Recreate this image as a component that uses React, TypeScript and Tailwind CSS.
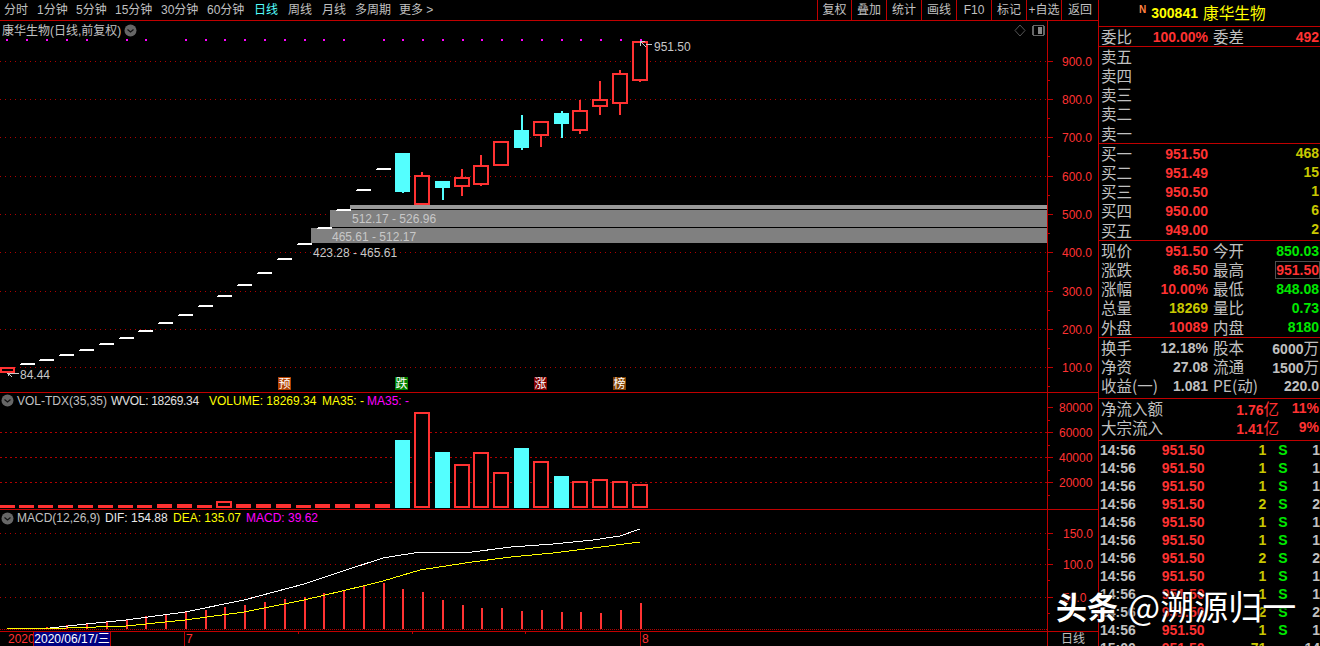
import { ReactNode } from 'react';

const RED = '#ff3232';
const CYAN = '#54ffff';

const tabs = [
  { t: '分时', w: 'w-[33px]' },
  { t: '1分钟', w: 'w-[39px]' },
  { t: '5分钟', w: 'w-[39px]' },
  { t: '15分钟', w: 'w-[46px]' },
  { t: '30分钟', w: 'w-[46px]' },
  { t: '60分钟', w: 'w-[47px]' },
  { t: '日线', w: 'w-[34px]', on: true },
  { t: '周线', w: 'w-[34px]' },
  { t: '月线', w: 'w-[33px]' },
  { t: '多周期', w: 'w-[44px]' },
  { t: '更多 >', w: 'w-[40px]' },
];
const buttons = [
  { t: '复权', w: 'w-[34px]' },
  { t: '叠加', w: 'w-[35px]' },
  { t: '统计', w: 'w-[35px]' },
  { t: '画线', w: 'w-[35px]' },
  { t: 'F10', w: 'w-[35px]' },
  { t: '标记', w: 'w-[35px]' },
  { t: '+自选', w: 'w-[35px]' },
  { t: '返回', w: 'w-[37px]' },
];

// [left, bodyTop, bodyBottom, wickTop, wickBottom, up]
const candles: [number, number, number, number, number, boolean][] = [
  [395, 153, 192, 153, 193, false],
  [414, 175, 205, 172, 205, true],
  [435, 181, 188, 181, 200, false],
  [454, 177, 187, 169, 196, true],
  [473, 165, 185, 155, 186, true],
  [493, 141, 166, 141, 166, true],
  [514, 130, 148, 115, 150, false],
  [533, 121, 136, 121, 147, true],
  [554, 113, 124, 111, 138, false],
  [572, 110, 131, 100, 134, true],
  [592, 99, 107, 81, 115, true],
  [612, 73, 104, 70, 115, true],
  [632, 41, 81, 41, 82, true],
];
const dashes = [
  [20, 363], [39, 359], [59, 354], [79, 349], [99, 343], [119, 337], [138, 330], [158, 322], [178, 314], [198, 305],
  [217, 295], [237, 284], [257, 272], [277, 258], [297, 243], [317, 227], [336, 209], [356, 189], [376, 168],
];
const dots = [6, 26, 46, 66, 86, 126, 145, 185, 205, 224, 244, 264, 284, 304, 323, 343, 383, 402, 422, 442, 462, 481, 501, 521, 541, 561, 580, 600, 620, 640];
const priceGrid = [61, 99, 137, 176, 214, 252, 291, 329, 367];
const priceAxis = ['900.0', '800.0', '700.0', '600.0', '500.0', '400.0', '300.0', '200.0', '100.0'];

const smallVol = [
  [0, 505], [19, 505], [38, 505], [58, 505], [78, 505], [98, 505], [118, 505], [137, 505], [157, 504], [177, 504],
  [197, 505], [236, 504], [256, 504], [276, 504], [296, 505], [315, 504], [335, 504], [355, 504], [375, 504],
];
const bigVol: [number, number, boolean][] = [
  [395, 440, false], [414, 412, true], [435, 452, false], [454, 464, true], [473, 452, true], [493, 472, true], [514, 448, false],
  [533, 461, true], [554, 476, false], [572, 481, true], [592, 479, true], [612, 481, true], [632, 484, true],
];
const macdBars = [
  [46, 627], [66, 625], [86, 623], [106, 621], [126, 619], [145, 616], [165, 614], [185, 612], [205, 610], [224, 607],
  [244, 605], [264, 602], [284, 599], [304, 597], [323, 593], [343, 590], [363, 586], [383, 583], [402, 589], [422, 592],
  [442, 600], [462, 605], [481, 608], [501, 608], [521, 611], [541, 610], [561, 612], [580, 612], [600, 613], [620, 610], [640, 603],
];
const dif = '50,628 86,624 126,620 185,612 244,600 304,584 343,571 383,558 420,552 472,552 511,547 553,544 593,540 620,536 640,529';
const dea = '7,629 67,628 126,626 185,620 244,612 304,600 363,586 383,581 420,570 472,562 511,557 553,553 593,548 640,542';

const badges = [
  { x: 278, t: '预', c: '#b04000' },
  { x: 395, t: '跌', c: '#008000' },
  { x: 534, t: '涨', c: '#800000' },
  { x: 613, t: '榜', c: '#804000' },
];

function Circle() {
  return (
    <svg width="13" height="13" viewBox="0 0 13 13" className="shrink-0">
      <circle cx="6.5" cy="6.5" r="6" fill="#666" />
      <path d="M3.5 5.5 6.5 8 9.5 5.5" fill="none" stroke="#111" strokeWidth="1.2" />
    </svg>
  );
}

function Hollow({ x, y, w, h }: { x: number; y: number; w: number; h: number }) {
  return <rect x={x + 1} y={y + 1} width={w - 2} height={h - 2} fill="#000" stroke={RED} strokeWidth="2" />;
}

function MainChart() {
  return (
    <svg viewBox="0 21 1047 371" className="absolute inset-0 w-[1047px] h-[371px]" shapeRendering="crispEdges" fontFamily="'Liberation Sans','Noto Sans CJK SC',sans-serif">
      {priceGrid.map((y) => (
        <line key={y} x1="0" x2="1047" y1={y + 0.5} y2={y + 0.5} stroke="#b00000" strokeDasharray="1 4" />
      ))}
      <rect x="350" y="205" width="697" height="4" fill="#999" />
      <rect x="330" y="210" width="717" height="17" fill="#808080" />
      <rect x="311" y="228" width="736" height="15" fill="#808080" />
      <g fontSize="12" fill="#c8c8c8" shapeRendering="auto">
        <text x="352" y="223">512.17 - 526.96</text>
        <text x="332" y="241">465.61 - 512.17</text>
        <text x="313" y="257">423.28 - 465.61</text>
        <text x="654" y="51">951.50</text>
        <text x="20" y="379">84.44</text>
      </g>
      {dots.map((x) => (
        <rect key={x} x={x} y="39" width="2" height="2" fill="#ff00ff" />
      ))}
      {dashes.map(([x, y]) => (
        <g key={x}>
          <rect x={x + 1} y={y} width="14" height="2" fill="#fff" />
          <rect x={x} y={y + 1} width="1" height="1" fill="#fff" />
        </g>
      ))}
      <Hollow x={0} y={367} w={15} h={6} />
      {candles.map(([x, top, bot, wt, wb, up]) =>
        up ? (
          <g key={x}>
            <rect x={x + 7} y={wt} width="2" height={wb - wt} fill={RED} />
            <Hollow x={x} y={top} w={16} h={bot - top} />
          </g>
        ) : (
          <g key={x}>
            <rect x={x + 7} y={wt} width="2" height={wb - wt} fill={CYAN} />
            <rect x={x} y={top} width="15" height={bot - top} fill={CYAN} />
          </g>
        ),
      )}
      <path d="M640 41 645 41M640 41 640 46M640 41 646 47M646 44 652 45" stroke="#c8c8c8" fill="none" />
      <path d="M8 373 13 373M8 373 8 376M8 373 12 377M7 373 19 373" stroke="#c8c8c8" fill="none" />
      {badges.map((b) => (
        <g key={b.x}>
          <rect x={b.x} y="377" width="13" height="13" fill={b.c} />
          <text x={b.x + 6.5} y="388" fontSize="12" textAnchor="middle" fill="#fff" shapeRendering="auto">{b.t}</text>
        </g>
      ))}
      <path d="M1020 25 1025 30.500 1020 36 1015 30.500Z" fill="none" stroke="#555" shapeRendering="auto" />
      <rect x="1033" y="25.500" width="11" height="10" rx="1" fill="none" stroke="#666" strokeWidth="1.500" />
      <rect x="1038" y="27" width="4" height="7" fill="#888" />
    </svg>
  );
}

function VolChart() {
  return (
    <svg viewBox="0 393 1047 116" className="absolute inset-0 w-[1047px] h-[116px]" shapeRendering="crispEdges">
      {[432, 457, 482].map((y) => (
        <line key={y} x1="0" x2="1047" y1={y + 0.5} y2={y + 0.5} stroke="#b00000" strokeDasharray="2 3" />
      ))}
      {smallVol.map(([x, y]) => (
        <rect key={x} x={x} y={y} width="15" height={508 - y} fill={RED} />
      ))}
      <Hollow x={216} y={501} w={16} h={7} />
      {bigVol.map(([x, y, up]) =>
        up ? <Hollow key={x} x={x} y={y} w={16} h={508 - y} /> : <rect key={x} x={x} y={y} width="15" height={508 - y} fill={CYAN} />,
      )}
    </svg>
  );
}

function MacdChart() {
  return (
    <svg viewBox="0 510 1047 121" className="absolute inset-0 w-[1047px] h-[121px]" shapeRendering="crispEdges">
      {[533, 564, 597, 629].map((y) => (
        <line key={y} x1="0" x2="1047" y1={y + 0.5} y2={y + 0.5} stroke="#b00000" strokeDasharray={y === 629 ? '1 1' : '1 4'} />
      ))}
      {macdBars.map(([x, y]) => (
        <rect key={x} x={x} y={y} width="2" height={629 - y} fill={RED} />
      ))}
      <polyline points={dif} fill="none" stroke="#fff" strokeWidth="1" />
      <polyline points={dea} fill="none" stroke="#ffff00" strokeWidth="1" />
    </svg>
  );
}

function Axis({ top, height, labels, x = 1062 }: { top: number; height: number; labels: [string, number][]; x?: number }) {
  const step = labels.length > 1 ? labels[1][1] - labels[0][1] : 0;
  return (
    <svg viewBox={`1048 ${top} 50 ${height}`} className="w-[50px]" style={{ height }} fontFamily="'Liberation Sans',sans-serif">
      {labels.map(([t, y]) => (
        <g key={t}>
          <line x1="1048" x2="1053" y1={y + 0.5} y2={y + 0.5} stroke="#c00000" shapeRendering="crispEdges" />
          <line x1="1048" x2="1050" y1={y + step / 2 + 0.5} y2={y + step / 2 + 0.5} stroke="#c00000" shapeRendering="crispEdges" />
          <text x={x} y={y + 5} fontSize="12" fill={RED}>{t}</text>
        </g>
      ))}
    </svg>
  );
}

function Label({ children }: { children: ReactNode }) {
  return <span className="text-[15.500px] leading-none text-[#c0c0c0] font-['Noto_Sans_CJK_SC',sans-serif] whitespace-nowrap">{children}</span>;
}

function Val({ children, c = 'text-[#ff3232]' }: { children: ReactNode; c?: string }) {
  return <span className={`text-[14px] leading-none font-bold whitespace-nowrap ${c}`}>{children}</span>;
}

const GRAY = 'text-[#c0c0c0]';
const GREEN = 'text-[#00e800]';
const YEL = 'text-[#c8c800]';

function Row2({ a, av, ac, b, bv, bc, boxed }: { a: string; av: ReactNode; ac?: string; b: string; bv: ReactNode; bc?: string; boxed?: boolean }) {
  return (
    <div className="grid grid-cols-[107px_106px] gap-x-[5px] pl-[2px] h-[19.200px] items-center">
      <div className="flex justify-between items-center">
        <Label>{a}</Label>
        <Val c={ac}>{av}</Val>
      </div>
      <div className="flex justify-between items-center">
        <Label>{b}</Label>
        {boxed ? (
          <span className="border border-[#505050] h-[18px] -mr-[1px] flex items-center">
            <Val c={bc}>{bv}</Val>
          </span>
        ) : (
          <Val c={bc}>{bv}</Val>
        )}
      </div>
    </div>
  );
}

function Wan({ n }: { n: string }) {
  return (
    <>
      {n}
      <span className="text-[15.500px] font-normal font-['Noto_Sans_CJK_SC',sans-serif]">万</span>
    </>
  );
}

function Quote() {
  const sells = ['卖五', '卖四', '卖三', '卖二', '卖一'];
  const buys = [
    ['买一', '951.50', '468'],
    ['买二', '951.49', '15'],
    ['买三', '950.50', '1'],
    ['买四', '950.00', '6'],
    ['买五', '949.00', '2'],
  ];
  const ticks = [1, 1, 1, 2, 1, 1, 2, 1, 1, 2, 1];
  return (
    <div className="w-[221px] h-[646px] overflow-hidden font-['Liberation_Sans','Noto_Sans_CJK_SC',sans-serif]">
      <div className="h-[27px] border-b border-[#c00000] flex items-center pl-[40px]">
        <span className="text-[10px] font-bold text-[#ff8040] mb-[8px] mr-[5px]">N</span>
        <span className="text-[14px] font-bold text-[#ffff00]">300841</span>
        <span className="ml-[5px] text-[15.700px] text-[#ffff00] font-['Noto_Sans_CJK_SC',sans-serif]">康华生物</span>
      </div>
      <div className="h-[20px] border-b border-[#c00000]">
        <Row2 a="委比" av="100.00%" b="委差" bv="492" />
      </div>
      <div className="h-[97px] border-b border-[#c00000] pl-[2px]">
        {sells.map((s) => (
          <div key={s} className="h-[19.200px] flex items-center">
            <Label>{s}</Label>
          </div>
        ))}
      </div>
      <div className="h-[97px] border-b border-[#c00000] pl-[2px]">
        {buys.map(([l, p, q]) => (
          <div key={l} className="h-[19.200px] flex items-center">
            <div className="w-[107px] flex justify-between items-center">
              <Label>{l}</Label>
              <Val>{p}</Val>
            </div>
            <div className="w-[111px] text-right">
              <Val c={YEL}>{q}</Val>
            </div>
          </div>
        ))}
      </div>
      <div className="h-[97px] border-b border-[#c00000]">
        <Row2 a="现价" av="951.50" b="今开" bv="850.03" bc={GREEN} />
        <Row2 a="涨跌" av="86.50" b="最高" bv="951.50" boxed />
        <Row2 a="涨幅" av="10.00%" b="最低" bv="848.08" bc={GREEN} />
        <Row2 a="总量" av="18269" ac={YEL} b="量比" bv="0.73" bc={GREEN} />
        <Row2 a="外盘" av="10089" b="内盘" bv="8180" bc={GREEN} />
      </div>
      <div className="h-[61px] border-b border-[#c00000]">
        <Row2 a="换手" av="12.18%" ac={GRAY} b="股本" bv={<Wan n="6000" />} bc={GRAY} />
        <Row2 a="净资" av="27.08" ac={GRAY} b="流通" bv={<Wan n="1500" />} bc={GRAY} />
        <Row2 a="收益(一)" av="1.081" ac={GRAY} b="PE(动)" bv="220.0" bc={GRAY} />
      </div>
      <div className="h-[42px] border-b border-[#c00000]">
        {[
          ['净流入额', '1.76', '11%'],
          ['大宗流入', '1.41', '9%'],
        ].map(([l, v, p]) => (
          <div key={l} className="h-[19.200px] flex items-center pl-[2px]">
            <div className="w-[178px] flex justify-between items-center">
              <Label>{l}</Label>
              <Val>
                {v}
                <span className="text-[15.500px] font-normal font-['Noto_Sans_CJK_SC',sans-serif]">亿</span>
              </Val>
            </div>
            <div className="w-[40px] text-right">
              <Val>{p}</Val>
            </div>
          </div>
        ))}
      </div>
      <div className="pt-[1px]">
        {ticks.map((n, i) => (
          <div key={i} className="h-[18px] flex items-center pl-[1px]">
            <span className="w-[62px]"><Val c={GRAY}>14:56</Val></span>
            <span className="w-[48px]"><Val>951.50</Val></span>
            <span className="w-[57px] text-right"><Val c={YEL}>{n}</Val></span>
            <span className="w-[23px] pl-[12px]"><Val c={GREEN}>S</Val></span>
            <span className="w-[31px] text-right"><Val c={GRAY}>{n}</Val></span>
          </div>
        ))}
        <div className="h-[18px] flex items-center pl-[1px]">
          <span className="w-[62px]"><Val c={GRAY}>15:00</Val></span>
          <span className="w-[48px]"><Val>951.50</Val></span>
          <span className="w-[57px] text-right"><Val c={YEL}>71</Val></span>
          <span className="w-[23px]" />
          <span className="w-[31px] text-right"><Val c={GRAY}>14</Val></span>
        </div>
      </div>
    </div>
  );
}

export default function App() {
  return (
    <div className="relative w-[1320px] h-[646px] overflow-hidden bg-black flex text-[12px] text-[#c0c0c0] font-['Liberation_Sans','Noto_Sans_CJK_SC',sans-serif]">
      <div className="w-[1099px] h-full border-r border-[#c00000] flex flex-col shrink-0">
        {/* toolbar */}
        <div className="h-[21px] border-b border-[#c00000] flex items-center shrink-0">
          <div className="flex flex-1 pl-[4px]">
            {tabs.map((x) => (
              <span key={x.t} className={`${x.w} whitespace-nowrap leading-[21px] ${x.on ? 'text-[#54ffff]' : ''}`}>{x.t}</span>
            ))}
          </div>
          <div className="flex h-full">
            {buttons.map((b) => (
              <span key={b.t} className={`${b.w} border-l border-[#c00000] text-center leading-[21px] whitespace-nowrap`}>{b.t}</span>
            ))}
          </div>
        </div>
        {/* price pane */}
        <div className="h-[372px] border-b border-[#c00000] flex shrink-0">
          <div className="relative w-[1047px]">
            <MainChart />
            <div className="relative flex items-center gap-[3px] pl-[2px] h-[19px]">
              <span className="whitespace-nowrap">康华生物(日线,前复权)</span>
              <Circle />
            </div>
          </div>
          <div className="border-l border-[#c00000]">
            <Axis top={21} height={371} labels={priceAxis.map((t, i) => [t, priceGrid[i]] as [string, number])} />
          </div>
        </div>
        {/* volume pane */}
        <div className="h-[117px] border-b border-[#c00000] flex shrink-0">
          <div className="relative w-[1047px]">
            <VolChart />
            <div className="relative flex items-center pl-[1px] h-[15px] whitespace-nowrap">
              <Circle />
              <span className="ml-[3px] w-[94px]">VOL-TDX(35,35)</span>
              <span className="w-[98px] text-[#e0e0e0] tracking-[-0.3px]">WVOL: 18269.34</span>
              <span className="w-[113px] text-[#ffff00]">VOLUME: 18269.34</span>
              <span className="w-[45px] text-[#ffff00]">MA35: -</span>
              <span className="text-[#ff00ff]">MA35: -</span>
            </div>
          </div>
          <div className="border-l border-[#c00000]">
            <Axis top={393} height={116} x={1059} labels={[['80000', 407], ['60000', 432], ['40000', 457], ['20000', 482]]} />
          </div>
        </div>
        {/* macd pane */}
        <div className="h-[122px] border-b border-[#c00000] flex shrink-0">
          <div className="relative w-[1047px]">
            <MacdChart />
            <div className="relative flex items-center pl-[1px] h-[16px] whitespace-nowrap">
              <Circle />
              <span className="ml-[3px] w-[88px]">MACD(12,26,9)</span>
              <span className="w-[68px] text-[#e8e8e8]">DIF: 154.88</span>
              <span className="w-[73px] text-[#ffff00]">DEA: 135.07</span>
              <span className="text-[#ff00ff]">MACD: 39.62</span>
            </div>
          </div>
          <div className="border-l border-[#c00000]">
            <Axis top={510} height={121} labels={[['150.0', 533], ['100.0', 564], ['50.0', 597]]} x={1063} />
          </div>
        </div>
        {/* date strip */}
        <div className="relative flex-1 flex leading-[15px] overflow-hidden">
          <div className="w-[33px] pl-[8px] text-[#ff3232] overflow-hidden">2020</div>
          <div className="w-[78px] border-x border-[#c00000] bg-[#000080] text-white text-center whitespace-nowrap">2020/06/17/三</div>
          <div className="w-[73px]" />
          <div className="w-[456px] border-l border-[#c00000] pl-[1px] text-[#ff3232]">7</div>
          <div className="w-[407px] border-l border-[#c00000] pl-[1px] text-[#ff3232]">8</div>
          <div className="w-[51px] border-l border-[#c00000] text-center">日线</div>
          <span className="absolute top-0 left-[298px] w-px h-[2px] bg-[#c00000]" />
          <span className="absolute top-0 left-[412px] w-px h-[2px] bg-[#c00000]" />
          <span className="absolute top-0 left-[525px] w-px h-[2px] bg-[#c00000]" />
        </div>
      </div>
      <Quote />
      {/* watermark */}
      <div className="absolute left-[1056px] top-[584px] flex items-center gap-[10px] whitespace-nowrap text-white font-['Noto_Sans_CJK_SC',sans-serif] leading-[44px] [text-shadow:0_0_3px_#000,0_0_2px_#000]">
        <span className="text-[31px] font-bold">头条</span>
        <span className="text-[34px]">@溯源归一</span>
      </div>
    </div>
  );
}
